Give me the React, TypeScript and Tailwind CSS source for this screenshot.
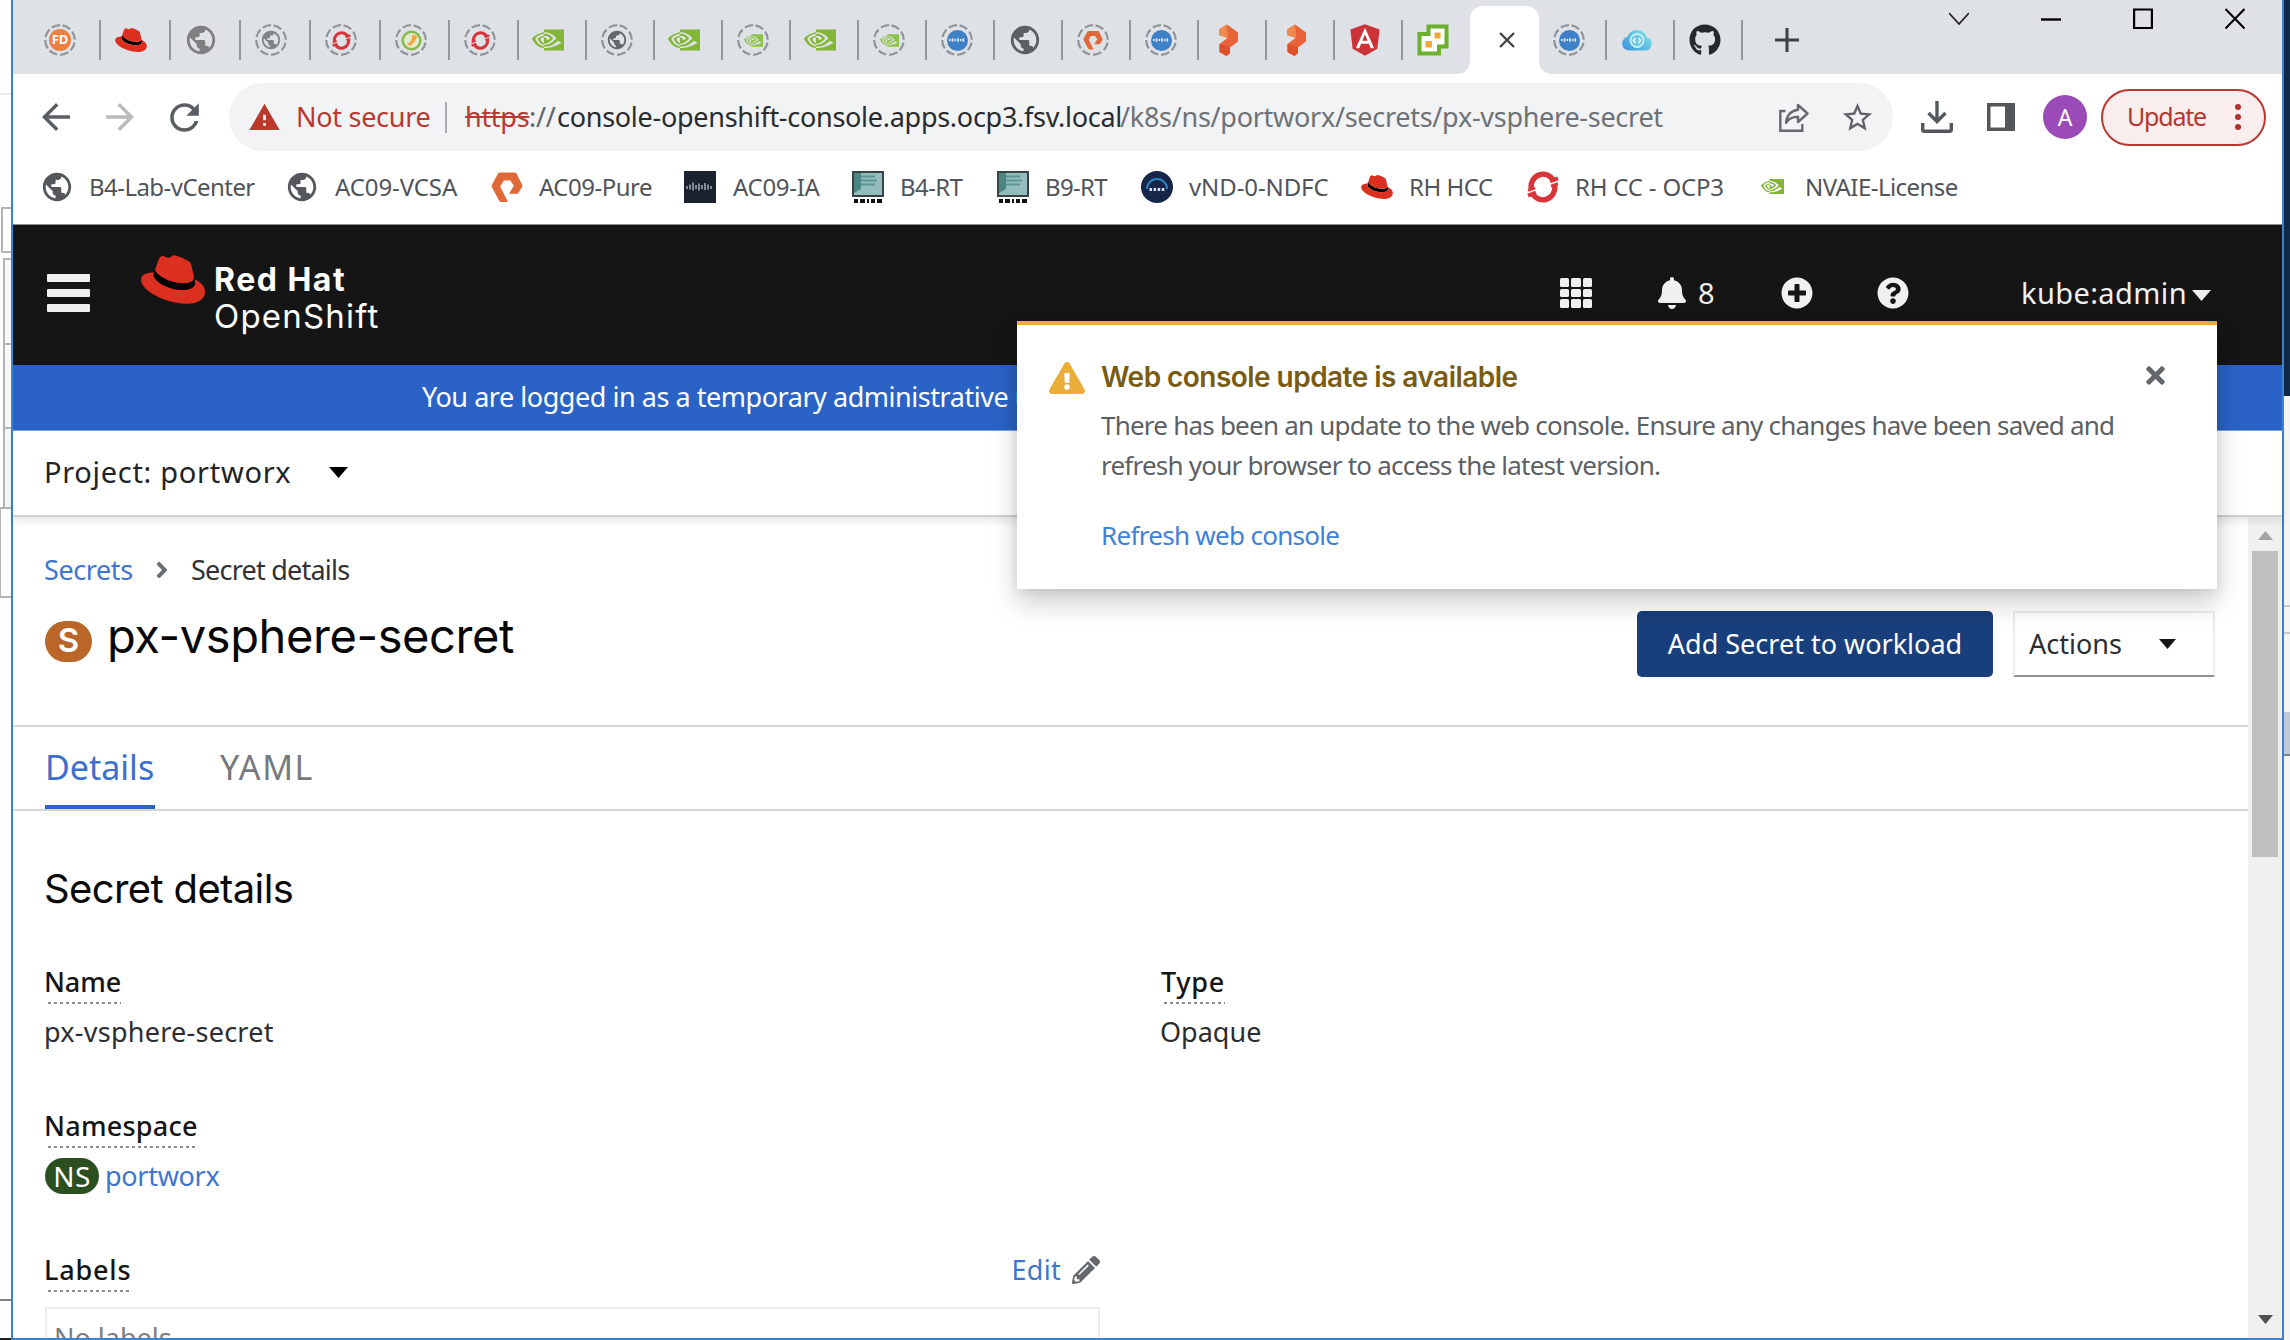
import type { ReactNode } from "react";
import {
  FaAngleRight,
  FaAngular,
  FaBell,
  FaExclamationTriangle,
  FaGithub,
  FaPencilAlt,
  FaPlusCircle,
  FaQuestionCircle,
  FaTimes,
} from "react-icons/fa";
import { MdArrowBack, MdArrowForward, MdPublic, MdRefresh, MdStarBorder, MdWarning } from "react-icons/md";
import { SiNvidia } from "react-icons/si";

/* ---------- site and product marks ---------- */

function RedHat({ className = "w-8 h-6" }: { className?: string }) {
  return (
    <svg viewBox="0 2.9 24 18.2" className={className}>
      <path
        fill="#000"
        d="M4.8 9.3 5.3 8.2C5.6 9.6 10 13.386 16 13.386c1.6 0 3.86-.33 3.86-2.2l.3.8c.2 1 .2 1.1.2 1.25 0 1.76-2 2.75-4.6 2.75-5.9 0-11.06-3.45-11.06-5.74 0-.3.05-.6.1-.95z"
      />
      <path
        fill="#dc2f20"
        d="M16.009 13.386c1.577 0 3.86-.326 3.86-2.202a1.765 1.765 0 0 0-.04-.431l-.94-4.08c-.216-.898-.406-1.305-1.982-2.093-1.223-.625-3.888-1.658-4.676-1.658-.733 0-.947.946-1.822.946-.842 0-1.467-.706-2.255-.706-.757 0-1.25.515-1.63 1.576 0 0-1.06 2.99-1.197 3.424a.81.81 0 0 0-.028.245c0 1.162 4.577 4.974 10.71 4.974m4.101-1.435c.218 1.032.218 1.14.218 1.277 0 1.765-1.984 2.745-4.593 2.745-5.895.004-11.06-3.451-11.06-5.734a2.326 2.326 0 0 1 .19-.925C2.746 9.415 0 9.794 0 12.217c0 3.969 9.405 8.861 16.851 8.861 5.71 0 7.149-2.582 7.149-4.62 0-1.605-1.387-3.425-3.887-4.512"
      />
    </svg>
  );
}

function Loading({ children }: { children: ReactNode }) {
  return (
    <div className="relative flex size-8 items-center justify-center">
      <svg viewBox="0 0 32 32" className="absolute inset-0 size-8">
        <circle cx="16" cy="16" r="14.8" fill="none" stroke="#909397" strokeWidth="2.2" strokeDasharray="8.6 3" transform="rotate(-80 16 16)" />
      </svg>
      {children}
    </div>
  );
}

function OpenShiftMark({ className = "size-8" }: { className?: string }) {
  return (
    <svg viewBox="0 0 32 32" className={className} fill="none" stroke="#d6353a" strokeWidth="5.4">
      <path d="M26.500 9.500A12 12.600 0 0 0 4.200 17.500" />
      <path d="M5.500 22.500A12 12.600 0 0 0 27.800 14.500" />
      <path d="M23 10.300 31 7.300M1 24.700 9 21.700" strokeWidth="4" />
      <path d="M24 15.200 31 12.600M1 19.400 8 16.800" strokeWidth="3" />
    </svg>
  );
}

function PureMark({ className = "size-8" }: { className?: string }) {
  return (
    <svg viewBox="0 0 32 32" className={className}>
      <path
        fill="#e0693a"
        d="M9 1.500h14.500q1.500 0 2.300 1.400L31 13.400q.8 1.400 0 2.800l-4.200 6.600H18l4.800-8-3.500-5.400h-6.400L9.200 15.600 17 31h-6.600q-1.500 0-2.200-1.300L1 16.400q-.7-1.400 0-2.800L6.800 2.900Q7.600 1.500 9 1.500z"
      />
    </svg>
  );
}

function PortworxMark() {
  return (
    <svg viewBox="0 0 32 32" className="size-8">
      <path fill="#e8623a" d="M6 5.500 14 .5 25 8.500v9L17 23.500v5.500L13.500 32 6.500 28v-8l8-6-8.500-3z" />
      <path fill="#f08a4d" d="M6 5.500 14 .5 15 14 6 11z" />
      <path fill="#dd5128" d="M6.500 20 17 23.500v5.500L13.500 32 6.500 28z" />
    </svg>
  );
}

function CiscoDot() {
  return (
    <div className="flex size-[21px] items-center justify-center rounded-full bg-[#3f80c6]">
      <svg viewBox="0 0 20 6" className="h-[6px] w-[18px]" stroke="#e4eefa" strokeWidth="1.8">
        <path d="M2 4V2M5 5V1M8 4V2M11 5V1M14 4V2M17 5V1" />
      </svg>
    </div>
  );
}

function VCenterMark() {
  return (
    <svg viewBox="0 0 32 32" className="size-8">
      <path d="M11.500 2.500h18v20h-7.500v7H2.500v-19.500h9z" fill="#fff" stroke="#6cb02c" strokeWidth="4" />
      <path d="M17.500 8.500h6v6h-6zM8.500 17h6.500v6.500H8.500z" fill="#f2a93b" />
    </svg>
  );
}

function CloudMark() {
  return (
    <svg viewBox="0 0 32 32" className="size-8">
      <defs>
        <linearGradient id="cloud" x1="0" y1="1" x2="1" y2="0.2">
          <stop offset="0" stopColor="#3d8ee0" />
          <stop offset="1" stopColor="#7be3e0" />
        </linearGradient>
      </defs>
      <path fill="url(#cloud)" d="M8 26.500a7 7 0 0 1-1.500-13.800A10 10 0 0 1 25.500 12.900 7 7 0 0 1 25 26.500z" />
      <circle cx="16" cy="16.500" r="6.500" fill="#6cc8e8" stroke="#c8f0f6" strokeWidth="1.800" />
      <path d="m14.500 14-2 2.500 2 2.500m3-5 2 2.500-2 2.500" fill="none" stroke="#fff" strokeWidth="1.400" />
    </svg>
  );
}

function ServerMark() {
  return (
    <svg viewBox="0 0 32 32" className="size-8">
      <path d="M1 1h30v24H1z" fill="#93bdbc" stroke="#3a4344" strokeWidth="2" />
      <path d="M2 2h7v16l-7 4z" fill="#4d8583" />
      <path d="M9 5.500h14M9 9.500h16M9 13.500h14" stroke="#5c9593" strokeWidth="2" />
      <path d="M2 30h28" stroke="#111" strokeWidth="4" strokeDasharray="4 2 5 2 2 2" />
    </svg>
  );
}

function WaveMark() {
  return (
    <svg viewBox="0 0 32 32" className="size-8">
      <path d="M0 0h32v32H0z" fill="#1c2130" />
      <path d="M3 15v3M6 13.500v5M9 11.500v8M12 14v4M15 12.500v7M18 14v4M21 12v7M24 13.500v5M27 15v3" stroke="#a9adb8" strokeWidth="1.500" />
    </svg>
  );
}

function NexusMark() {
  return (
    <svg viewBox="0 0 32 32" className="size-8">
      <circle cx="16" cy="16" r="16" fill="#16264a" />
      <path d="M6 18a10 10 0 0 1 20 0" fill="none" stroke="#2b86c0" strokeWidth="2" />
      <path d="M8.500 18.500h15" stroke="#dbe4f2" strokeWidth="3" strokeDasharray="2.500 1.600" />
    </svg>
  );
}

const nvidia = <SiNvidia className="size-8 text-[#83b636]" />;
const nvidiaLoading = (
  <Loading>
    <SiNvidia className="size-[19px] text-[#8dc04a]" />
  </Loading>
);

/* ---------- browser chrome ---------- */

const tabs: { w: string; icon: ReactNode }[] = [
  {
    w: "w-[88px] pl-[31px]",
    icon: (
      <Loading>
        <div className="flex size-[22px] items-center justify-center rounded-full bg-[#ec8040] text-[13px] font-bold text-white">FD</div>
      </Loading>
    ),
  },
  { w: "w-[70px] pl-[14px]", icon: <RedHat /> },
  { w: "w-[70px] pl-[13px]", icon: <MdPublic className="size-[34px] text-[#808080]" /> },
  { w: "w-[70px] pl-[14px]", icon: <Loading><MdPublic className="size-[22px] text-[#808488]" /></Loading> },
  { w: "w-[70px] pl-[14px]", icon: <Loading><OpenShiftMark className="size-[19px]" /></Loading> },
  {
    w: "w-[69px] pl-[14px]",
    icon: (
      <Loading>
        <svg viewBox="0 0 22 22" className="size-[21px]">
          <circle cx="11" cy="11" r="9.200" fill="#e3e9cf" stroke="#86ba4b" strokeWidth="2.600" />
          <path d="M6 15.500 11 11l1-6 5 1.500-2 5-5 5z" fill="#f0a63c" />
        </svg>
      </Loading>
    ),
  },
  { w: "w-[69px] pl-[14px]", icon: <Loading><OpenShiftMark className="size-[19px]" /></Loading> },
  { w: "w-[68px] pl-[13px]", icon: nvidia },
  { w: "w-[68px] pl-[14px]", icon: <Loading><MdPublic className="size-[22px] text-[#63676b]" /></Loading> },
  { w: "w-[68px] pl-[13px]", icon: nvidia },
  { w: "w-[68px] pl-[14px]", icon: nvidiaLoading },
  { w: "w-[68px] pl-[13px]", icon: nvidia },
  { w: "w-[68px] pl-[14px]", icon: nvidiaLoading },
  { w: "w-[68px] pl-[14px]", icon: <Loading><CiscoDot /></Loading> },
  { w: "w-[68px] pl-[13px]", icon: <MdPublic className="size-[34px] text-[#5b6064]" /> },
  { w: "w-[68px] pl-[14px]", icon: <Loading><PureMark className="size-[20px]" /></Loading> },
  { w: "w-[68px] pl-[14px]", icon: <Loading><CiscoDot /></Loading> },
  { w: "w-[68px] pl-[14px]", icon: <PortworxMark /> },
  { w: "w-[68px] pl-[14px]", icon: <PortworxMark /> },
  {
    w: "w-[68px] pl-[14px]",
    icon: (
      <div className="flex size-8 items-center justify-center bg-[radial-gradient(circle,#fff_0_10px,transparent_11px)]">
        <FaAngular className="size-[36px] shrink-0 text-[#cb3338]" />
      </div>
    ),
  },
];

const tabsAfter: { w: string; icon: ReactNode }[] = [
  { w: "w-[68px] pl-[14px]", icon: <Loading><CiscoDot /></Loading> },
  { w: "w-[68px] pl-[14px]", icon: <CloudMark /> },
  { w: "w-[68px] pl-[14px]", icon: <FaGithub className="size-8 text-[#24292e]" /> },
];

function Tab({ w, icon }: { w: string; icon: ReactNode }) {
  return (
    <div className={`flex h-10 shrink-0 items-center border-r-2 border-[#94979b] ${w}`}>
      <div className="shrink-0">{icon}</div>
    </div>
  );
}

function TabStrip() {
  return (
    <div className="relative flex h-[74px] shrink-0 bg-[#dee1e6] pt-[6px]">
      <div className="flex h-[68px] items-center">
        {tabs.map((t, i) => (
          <Tab key={i} {...t} />
        ))}
        <div className="w-[67px] pl-[14px]">
          <VCenterMark />
        </div>
      </div>
      <div className="relative flex h-[68px] w-[69px] items-center justify-center rounded-t-[13px] bg-white pl-[5px]">
        <div className="absolute bottom-0 -left-3 size-3 bg-[radial-gradient(circle_at_0_0,transparent_11.5px,#fff_12px)]" />
        <div className="absolute -right-3 bottom-0 size-3 bg-[radial-gradient(circle_at_100%_0,transparent_11.5px,#fff_12px)]" />
        <svg viewBox="0 0 16 16" className="size-4" stroke="#3c4043" strokeWidth="2.200">
          <path d="M1 1l14 14M15 1 1 15" />
        </svg>
      </div>
      <div className="flex h-[68px] items-center">
        {tabsAfter.map((t, i) => (
          <Tab key={i} {...t} />
        ))}
        <svg viewBox="0 0 24 24" className="ml-8 size-6" stroke="#3c4043" strokeWidth="3">
          <path d="M12 0v24M0 12h24" />
        </svg>
      </div>
      <div className="ml-auto flex h-7 gap-[72px] pr-[37px]">
        <svg viewBox="0 0 20 28" className="h-7 w-5" fill="none" stroke="#222" strokeWidth="1.800">
          <path d="m0 7 10 11L20 7" />
        </svg>
        <svg viewBox="0 0 20 28" className="h-7 w-5" fill="none" stroke="#000" strokeWidth="2.400">
          <path d="M0 13.500h20" />
        </svg>
        <svg viewBox="0 0 20 28" className="h-7 w-5" fill="none" stroke="#000" strokeWidth="2.200">
          <path d="M1.100 3.500h17.800v18.500H1.100z" />
        </svg>
        <svg viewBox="0 0 20 28" className="h-7 w-5" fill="none" stroke="#000" strokeWidth="2">
          <path d="m.5 3 19 19.500M19.500 3l-19 19.500" />
        </svg>
      </div>
    </div>
  );
}

function Toolbar() {
  return (
    <div className="flex h-[85px] shrink-0 items-center bg-white pt-[1px] pl-[22px]">
      <MdArrowBack className="size-[42px] text-[#5a5e63]" />
      <MdArrowForward className="ml-[22px] size-[42px] text-[#b9bbbe]" />
      <MdRefresh className="ml-[22px] size-[43px] text-[#5a5e63]" />
      <div className="ml-[23px] flex h-[68px] w-[1664px] shrink-0 items-center rounded-full bg-[#f1f3f4] pl-[19px] text-[27px] tracking-[-0.28px] whitespace-nowrap">
        <MdWarning className="size-[33px] shrink-0 text-[#b93a2c]" />
        <span className="ml-[15px] w-[134px] text-[#b83a32]">Not secure</span>
        <div className="ml-[15px] h-[31px] w-[2px] bg-[#a9acb0]" />
        <span className="ml-[18px] w-[64px] text-[#b83a32] line-through decoration-2">https</span>
        <span className="w-[28px] text-[#5f6368]">://</span>
        <span className="w-[563px] text-[#2a2b2e]">console-openshift-console.apps.ocp3.fsv.local</span>
        <span className="w-[543px] text-[#6e7277]">/k8s/ns/portworx/secrets/px-vsphere-secret</span>
        <svg viewBox="0 0 30 29" className="ml-[116px] h-[29px] w-[30px] shrink-0" fill="none" stroke="#666a6e" strokeWidth="2.400">
          <path d="M6.500 8H1.300v19.700h22V21" />
          <path d="M19 2l9.500 8.500L19 19v-5.200c-5.500 0-9 1.500-12 6 .8-6.500 4.500-12 12-13z" strokeLinejoin="round" />
        </svg>
        <MdStarBorder className="ml-[31px] size-[35px] shrink-0 text-[#5f6368]" />
      </div>
      <svg viewBox="0 0 32 32" className="ml-[28px] size-8 shrink-0" fill="none" stroke="#54585d" strokeWidth="3.400">
        <path d="M16 0v20M7.500 12l8.500 8.500 8.500-8.500M1.700 22v6.500q0 1.800 1.800 1.800h25q1.800 0 1.800-1.800V22" />
      </svg>
      <svg viewBox="0 0 28 28" className="ml-[34px] size-7 shrink-0">
        <path d="M0 0h28v28H0zM3.500 3.500v21H18v-21z" fillRule="evenodd" fill="#54585d" />
      </svg>
      <div className="ml-[28px] flex size-11 shrink-0 items-center justify-center rounded-full bg-[#9b4bb7] text-[23px] text-white">A</div>
      <div className="ml-[14px] flex h-[57px] w-[165px] shrink-0 items-center rounded-full border-2 border-[#b9382f] bg-[#f9eeed] pl-[24px] text-[25px] text-[#b4382f]">
        <span className="w-[77px] tracking-[-1.2px]">Update</span>
        <div className="ml-[31px] flex flex-col gap-1">
          <div className="size-[6px] rounded-full bg-[#b3312a]" />
          <div className="size-[6px] rounded-full bg-[#b3312a]" />
          <div className="size-[6px] rounded-full bg-[#b3312a]" />
        </div>
      </div>
    </div>
  );
}

const globe = <MdPublic className="-ml-[3px] size-[34px] text-[#54585d]" />;
const bookmarks: { w: string; icon: ReactNode; label: string; track: string }[] = [
  { w: "w-[245px]", icon: globe, label: "B4-Lab-vCenter", track: "-ml-[2px] tracking-[-0.55px]" },
  { w: "w-[203px]", icon: globe, label: "AC09-VCSA", track: "-ml-[1px] tracking-[-0.1px]" },
  { w: "w-[193px]", icon: <PureMark />, label: "AC09-Pure", track: "tracking-[-0.5px]" },
  { w: "w-[168px]", icon: <WaveMark />, label: "AC09-IA", track: "ml-[1px] tracking-[-0.3px]" },
  { w: "w-[145px]", icon: <ServerMark />, label: "B4-RT", track: "tracking-[-0.6px]" },
  { w: "w-[144px]", icon: <ServerMark />, label: "B9-RT", track: "tracking-[-0.7px]" },
  { w: "w-[220px]", icon: <NexusMark />, label: "vND-0-NDFC", track: "tracking-[-0.1px]" },
  { w: "w-[166px]", icon: <RedHat />, label: "RH HCC", track: "tracking-[-0.5px]" },
  { w: "w-[230px]", icon: <OpenShiftMark />, label: "RH CC - OCP3", track: "tracking-[-0.2px]" },
  { w: "w-[220px]", icon: <SiNvidia className="ml-[4px] size-[23px] text-[#83b636]" />, label: "NVAIE-License", track: "tracking-[-0.55px]" },
];

function Bookmarks() {
  return (
    <div className="flex h-[66px] shrink-0 items-center border-b border-[#8f8f8f] bg-white pb-[10px] pl-[30px] text-[24px] text-[#505459]">
      {bookmarks.map((b) => (
        <div key={b.label} className={`flex shrink-0 items-center whitespace-nowrap ${b.w}`}>
          <div className="w-12 shrink-0">{b.icon}</div>
          <span className={b.track}>{b.label}</span>
        </div>
      ))}
    </div>
  );
}

/* ---------- console ---------- */

function Caret({ className }: { className: string }) {
  return (
    <svg viewBox="0 0 20 11" preserveAspectRatio="none" className={className} fill="currentColor">
      <path d="M0 0h20L10 11z" />
    </svg>
  );
}

function Masthead() {
  return (
    <div className="flex h-[140px] shrink-0 bg-[#151515] text-[#f0f0f0]">
      <div className="mt-[49px] ml-[34px] flex w-[43px] flex-col gap-[7px]">
        <div className="h-2 rounded-[1px] bg-[#f0f0f0]" />
        <div className="h-2 rounded-[1px] bg-[#f0f0f0]" />
        <div className="h-2 rounded-[1px] bg-[#f0f0f0]" />
      </div>
      <RedHat className="mt-[30px] ml-[51px] h-[49px] w-[64px]" />
      <div className="mt-[37px] ml-[9px] font-['Inter',sans-serif] leading-[36px] text-white">
        <div className="text-[32px] font-bold tracking-[1.5px]">Red Hat</div>
        <div className="text-[33px] tracking-[1.2px]">OpenShift</div>
      </div>
      <div className="ml-auto flex h-[136px] items-center pr-[71px] text-[29px]">
        <div className="w-[98px]">
          <div className="grid w-8 grid-cols-3 gap-[2px]">
            {Array.from({ length: 9 }, (_, i) => (
              <div key={i} className="h-[8.500px] rounded-[1.500px] bg-[#f0f0f0]" />
            ))}
          </div>
        </div>
        <div className="flex w-[123px] items-center">
          <FaBell className="size-8 -ml-[2px]" />
          <span className="ml-[10px]">8</span>
        </div>
        <div className="w-24">
          <FaPlusCircle className="size-8" />
        </div>
        <div className="w-[144px]">
          <FaQuestionCircle className="size-8" />
        </div>
        <span className="w-[171px] tracking-[0.4px]">kube:admin</span>
        <Caret className="mt-1 h-[11px] w-[19px]" />
      </div>
    </div>
  );
}

function UpdateToast() {
  return (
    <div className="absolute top-[321px] left-[1017px] z-10 h-[268px] w-[1200px] border-t-4 border-[#f0ab37] bg-white shadow-[0_14px_26px_rgba(3,3,3,0.2),0_0_10px_rgba(3,3,3,0.1)]">
      <div className="flex h-full pt-[32px] pl-[32px]">
        <FaExclamationTriangle className="mt-[3px] size-[36px] shrink-0 text-[#ecac3a]" />
        <div className="ml-[16px]">
          <div className="font-['Inter',sans-serif] text-[28px] leading-10 font-semibold tracking-[-0.54px] text-[#795b14]">
            Web console update is available
          </div>
          <div className="mt-[8px] text-[26px] leading-10 tracking-[-0.78px] whitespace-nowrap text-[#5c5f63]">
            There has been an update to the web console. Ensure any changes have been saved and
            <br />
            refresh your browser to access the latest version.
          </div>
          <div className="mt-[30px] text-[26px] leading-10 tracking-[-0.7px] text-[#3f80d8]">Refresh web console</div>
        </div>
        <FaTimes className="mt-[5px] mr-[48px] ml-auto size-[27px] shrink-0 text-[#63666a]" />
      </div>
    </div>
  );
}

function Term({ children }: { children: ReactNode }) {
  return (
    <div className="w-fit">
      <div className="h-10 text-[27px] leading-10 font-medium text-[#151515]">{children}</div>
      <div className="h-[2px] bg-[repeating-linear-gradient(90deg,transparent_0_3px,#8a8d90_3px_6px)]" />
    </div>
  );
}

function Details() {
  return (
    <div className="flex grow flex-col overflow-hidden bg-white text-[#2c2d30]">
      <div className="mt-[33px] flex h-10 shrink-0 items-center pl-[31px] text-[27px]">
        <span className="w-[111px] tracking-[-0.4px] text-[#3f76cd]">Secrets</span>
        <FaAngleRight className="-ml-[6px] size-[26px] text-[#6a6e73]" />
        <span className="ml-[16px] tracking-[-0.78px] text-[#303235]">Secret details</span>
      </div>
      <div className="mt-[21px] flex h-[66px] shrink-0 items-center pl-8">
        <div className="mb-[6px] flex h-[41px] w-[47px] items-center justify-center rounded-full bg-[#ba6628] font-['Inter',sans-serif] text-[33px] font-semibold text-white">S</div>
        <h1 className="mb-[16px] ml-[15px] font-['Inter',sans-serif] text-[47px] leading-[60px] tracking-[-0.4px] text-[#060606]">px-vsphere-secret</h1>
        <div className="ml-auto flex h-[66px] w-[356px] items-center justify-center rounded-[5px] bg-[#183e7b] text-[27px] whitespace-nowrap text-white">
          Add Secret to workload
        </div>
        <div className="mr-[33px] ml-5 flex h-[66px] w-[202px] items-center border-2 border-[#ececec] border-b-[#8f9296] pl-[14px] text-[27px]">
          <span className="w-[130px]">Actions</span>
          <Caret className="h-[10px] w-[17px] text-[#151515]" />
        </div>
      </div>
      <div className="mt-12 flex h-[86px] shrink-0 gap-[65px] border-y-2 border-[#d6d6d6] pl-8 text-[34px] leading-[80px]">
        <div className="h-[82px] w-[110px] border-b-4 border-[#2b63c6] text-[#3a70cb]">Details</div>
        <div className="tracking-[1.6px] text-[#76797d]">YAML</div>
      </div>
      <h2 className="mt-[54px] shrink-0 pl-[31px] font-['Inter',sans-serif] text-[40px] leading-[48px] tracking-[-0.62px] text-[#0a0a0a]">Secret details</h2>
      <div className="mt-[49px] grid shrink-0 grid-cols-[1055px_1fr] gap-x-[61px] pl-8 text-[27px] leading-10">
        <div>
          <Term>
            <span className="-ml-[1px] tracking-[-0.1px]">Name</span>
          </Term>
          <div className="mt-2 -ml-[1px] tracking-[0.25px]">px-vsphere-secret</div>
          <div className="mt-[54px]" />
          <Term>
            <span className="-ml-[1px] tracking-[0.25px]">Namespace</span>
          </Term>
          <div className="mt-2 flex h-10 items-center">
            <div className="flex h-[36px] w-[54px] items-center justify-center rounded-full bg-[#2b4f21] text-[28px] tracking-[0.4px] text-white">NS</div>
            <span className="ml-[6px] tracking-[-0.3px] text-[#3f76cd]">portworx</span>
          </div>
          <div className="mt-[54px] flex justify-between">
            <Term>
              <span className="-ml-[1px] tracking-[0.8px]">Labels</span>
            </Term>
            <div className="flex h-10 items-center">
              <span className="tracking-[0.3px] text-[#3f76cd]">Edit</span>
              <FaPencilAlt className="ml-[11px] size-7 text-[#66696d]" />
            </div>
          </div>
          <div className="mt-[15px] h-[70px] border-2 border-[#ededed] pt-[9px] pl-[7px] text-[#7b7e82]">No labels</div>
        </div>
        <div>
          <Term>
            <span className="tracking-[0.7px]">Type</span>
          </Term>
          <div className="mt-2 -ml-[1px]">Opaque</div>
        </div>
      </div>
    </div>
  );
}

function Scrollbar() {
  return (
    <div className="flex w-[34px] shrink-0 flex-col items-center bg-[#f0f0f0]">
      <svg viewBox="0 0 15 9" className="mt-[14px] h-[9px] w-[15px]">
        <path d="M0 9h15L7.500 0z" fill="#a3a3a3" />
      </svg>
      <div className="mt-[11px] h-[306px] w-[26px] bg-[#c0c0c0]" />
      <Caret className="mt-auto mb-[14px] h-[9px] w-[15px] text-[#505050]" />
    </div>
  );
}

/* Slivers of the desktop windows that sit behind the browser */
function LeftSliver() {
  return (
    <div className="flex w-[11px] shrink-0 flex-col bg-white">
      <div className="mt-[93px] h-[2px] bg-[#ececec]" />
      <div className="mt-[112px] ml-[1px] h-[46px] border-2 border-r-0 border-[#b4b4b4]" />
      <div className="mt-[5px] ml-[3px] h-[85px] border-2 border-r-0 border-b-0 border-[#b4b4b4] bg-[#f8f8f8]" />
      <div className="ml-[3px] h-[84px] border-t-2 border-l-2 border-[#b4b4b4] bg-[#f8f8f8]" />
      <div className="ml-[3px] h-[80px] border-t-2 border-l-2 border-[#b4b4b4] bg-[#f8f8f8]" />
      <div className="h-[91px] border-y-2 border-l border-[#b4b4b4]" />
      <div className="mt-[701px] h-[2px] bg-[#808080]" />
      <div className="mt-auto h-[2px] bg-[#222]" />
    </div>
  );
}

function RightSliver() {
  return (
    <div className="flex w-[6px] shrink-0 flex-col bg-[#f4f4f4]">
      <div className="h-[396px] bg-[#10294b]" />
      <div className="mt-[209px] h-[2px] bg-[#c9c9c9]" />
      <div className="mt-[25px] h-[2px] bg-[#c9c9c9]" />
      <div className="mt-[78px] h-[44px] border-b-2 border-[#7d838a] bg-[#bfcad6]" />
    </div>
  );
}

export default function App() {
  return (
    <div className="relative flex h-[1340px] w-[2290px] overflow-hidden bg-white font-['Noto_Sans',sans-serif]">
      <LeftSliver />
      <div className="flex w-[2273px] shrink-0 flex-col border-x-2 border-b-2 border-[#3b82d0]">
        <TabStrip />
        <Toolbar />
        <Bookmarks />
        <Masthead />
        <div className="flex h-[66px] shrink-0 items-center justify-center border-b border-[#7aa4e6] bg-[#2a63c5] pb-[1px] text-[27px] tracking-[-0.46px] whitespace-nowrap text-white">
          <span className="-ml-[1px] w-[1450px]">
            You are logged in as a temporary administrative user. Update the cluster OAuth configuration to allow others to log in.
          </span>
        </div>
        <div className="z-[1] flex h-[86px] shrink-0 items-center border-b-2 border-[#d0d0d0] bg-white pb-[2px] pl-[31px] text-[29px] text-[#222326] shadow-[0_4px_8px_rgba(3,3,3,0.1)]">
          <span className="w-[285px] tracking-[0.7px]">Project: portworx</span>
          <Caret className="h-[11px] w-[19px] text-black" />
        </div>
        <div className="flex min-h-0 grow">
          <Details />
          <Scrollbar />
        </div>
      </div>
      <RightSliver />
      <UpdateToast />
    </div>
  );
}
